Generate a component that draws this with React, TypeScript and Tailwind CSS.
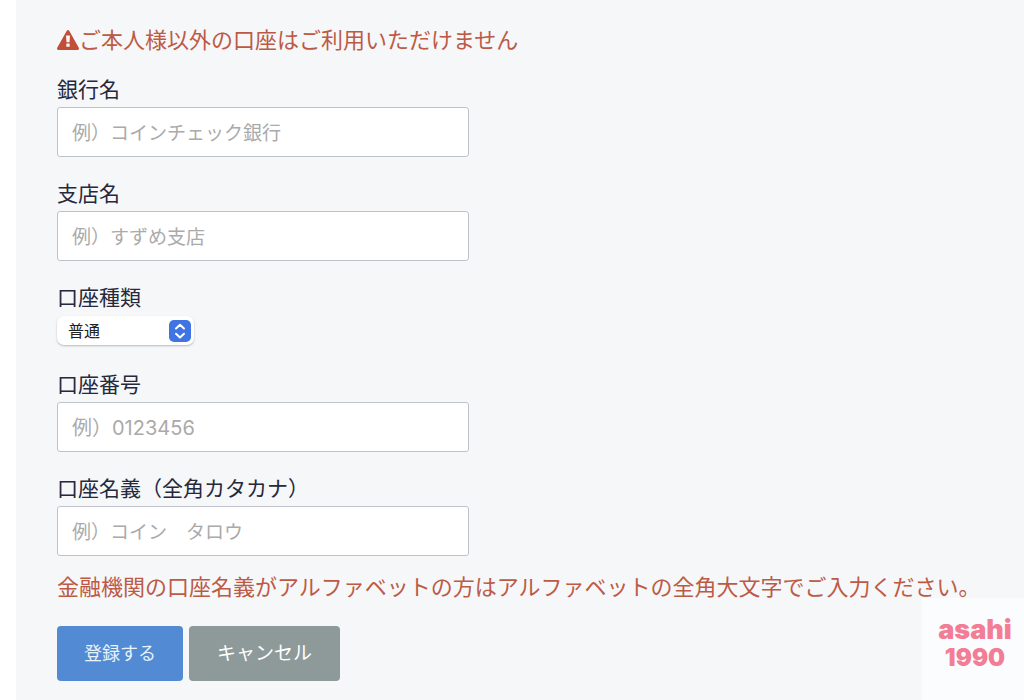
import React from "react";

type TextFieldProps = {
  id: string;
  label: string;
  placeholder: string;
  numeric?: boolean;
};

function TextField({ id, label, placeholder, numeric = false }: TextFieldProps) {
  return (
    <div className="flex flex-col">
      <label htmlFor={id} className="pb-0.5 text-[21px] leading-[30px] text-[#25293b]">
        {label}
      </label>
      <input
        id={id}
        type="text"
        inputMode={numeric ? "numeric" : "text"}
        placeholder={placeholder}
        className={`h-[50px] w-full max-w-[412px] rounded-[3px] border border-[#bfc2ca] bg-white px-3.5 pt-0.5 text-[#25293b] outline-none placeholder:text-[#aaaaaa] focus:border-[#528bd3] ${
          numeric ? "text-[20px]" : "text-[19px]"
        }`}
      />
    </div>
  );
}

function WarningIcon() {
  return (
    <svg viewBox="0 0 22 20" className="h-5 w-[22px] shrink-0" aria-hidden="true">
      <path
        d="M9.8.7a1.4 1.4 0 0 1 2.4 0l9.6 17.1a1.4 1.4 0 0 1-1.2 2.1H1.4A1.4 1.4 0 0 1 .2 17.8z"
        fill="#c14f37"
      />
      <path d="M9 5.6h4l-.5 6.6h-3z" fill="#f5f7f9" />
      <rect x="9.3" y="13.6" width="3.4" height="3.2" rx=".4" fill="#f5f7f9" />
    </svg>
  );
}

function AccountTypeSelect() {
  return (
    <div className="flex flex-col items-start">
      <label htmlFor="account-type" className="pb-0.5 text-[21px] leading-[30px] text-[#25293b]">
        口座種類
      </label>
      <div className="grid w-[137px] items-center pt-px pb-[3px]">
        <select
          id="account-type"
          className="col-start-1 row-start-1 h-[29px] w-full appearance-none rounded-[7px] bg-white pt-px pr-8 pl-[11px] text-[16px] text-[#222222] shadow-[0_1px_2px_rgba(0,0,0,0.25)] outline-none"
        >
          <option>普通</option>
          <option>当座</option>
        </select>
        <svg
          viewBox="0 0 22 22"
          className="pointer-events-none col-start-1 row-start-1 mr-[3px] size-[22px] justify-self-end"
          aria-hidden="true"
        >
          <rect width="22" height="22" rx="5" fill="#3f74e3" />
          <path
            d="M7 8.5 11 4.7l4 3.8M7 13.7l4 3.8 4-3.8"
            fill="none"
            stroke="#ffffff"
            strokeWidth="2"
            strokeLinecap="round"
            strokeLinejoin="round"
          />
        </svg>
      </div>
    </div>
  );
}

export default function App() {
  return (
    <div className="relative min-h-screen bg-white pl-4 font-['Inter','Noto_Sans_CJK_JP',sans-serif]">
      <main className="min-h-screen bg-[#f5f7f9] pt-6 pr-4 pb-4 pl-[41px]">
        <p className="flex items-center text-[22px] leading-8 text-[#bd5a45]">
          <WarningIcon />
          <span>ご本人様以外の口座はご利用いただけません</span>
        </p>

        <form className="mt-[19px]" onSubmit={(event) => event.preventDefault()}>
          <div className="flex flex-col gap-[22px]">
            <TextField id="bank" label="銀行名" placeholder="例）コインチェック銀行" />
            <TextField id="branch" label="支店名" placeholder="例）すずめ支店" />
            <AccountTypeSelect />
            <TextField id="number" label="口座番号" placeholder="例）0123456" numeric />
            <TextField id="holder" label="口座名義（全角カタカナ）" placeholder="例）コイン　タロウ" />
          </div>

          <p className="mt-[15px] text-[22px] leading-8 text-[#bd5a45]">
            金融機関の口座名義がアルファベットの方はアルファベットの全角大文字でご入力ください。
          </p>

          <div className="mt-[23px] flex gap-1.5">
            <button
              type="submit"
              className="h-[55px] w-[126px] rounded-[4px] bg-[#528bd3] text-[18px] text-[#e6f3fb]"
            >
              登録する
            </button>
            <button
              type="button"
              className="h-[55px] w-[151px] rounded-[4px] bg-[#8e999a] pt-0.5 text-[19px] text-white"
            >
              キャンセル
            </button>
          </div>
        </form>
      </main>

      <div className="absolute right-0 bottom-0 flex h-[102px] w-[102px] flex-col items-center bg-[#fbfcfd] pt-[18px] pl-1 font-black text-[#f27d95]">
        <span className="text-[27px] leading-7">asahi</span>
        <span className="text-[24px] leading-7">1990</span>
      </div>
    </div>
  );
}
